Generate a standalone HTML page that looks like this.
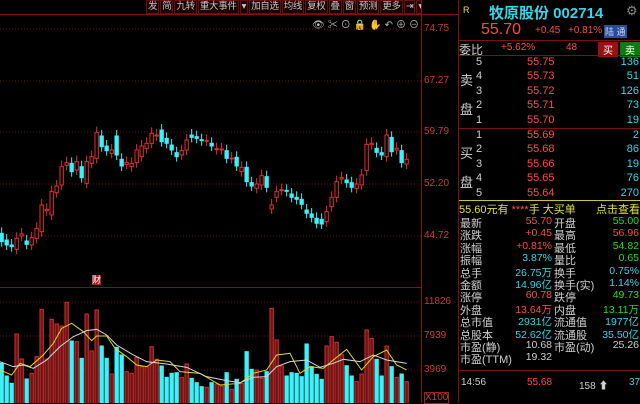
<!DOCTYPE html>
<html><head><meta charset="utf-8"><style>
*{margin:0;padding:0}
body{width:640px;height:403px;background:#000;overflow:hidden;position:relative;font-family:"Liberation Sans","Noto Sans CJK SC",sans-serif}
.a{position:absolute;white-space:nowrap}
#tb{position:absolute;left:146px;top:0;height:14px;display:flex;font-size:9.5px;color:#c8c8c8;width:275px;overflow:hidden;white-space:nowrap}
#tb span{flex-shrink:0;border:1px solid #6a0c0c;background:#1a0000;padding:0 1px;line-height:12px;margin-right:1px;letter-spacing:-0.3px}
.ax{position:absolute;left:424px;font-size:10px;color:#d03838}
#rp{position:absolute;left:458px;top:0;width:182px;height:403px;border-left:1px solid #7a1010}
.r{position:absolute;font-size:11px;white-space:nowrap}
.red{color:#ff4a4a}.cy{color:#36d6e8}.gr{color:#22dd22}.wh{color:#d0d0d0}.ye{color:#e0e040}
.hl{position:absolute;left:0;width:182px;height:1px;background:#7a1010}
</style></head><body>
<div style="position:absolute;left:0;top:14px;width:458px;height:1px;background:#8a1010"></div>
<div style="position:absolute;left:421px;top:0;width:1px;height:403px;background:#8a1010"></div>
<div style="position:absolute;left:0;top:287px;width:421px;height:1px;background:#8a1010"></div>
<div id="tb"><span>发</span><span>简</span><span>九转</span><span>重大事件</span><span>▾</span><span>加自选</span><span>均线</span><span>复权</span><span>叠</span><span>窗</span><span>预测</span><span>更多</span><span>⇥</span><span>▾</span></div>
<div class="a" style="left:312px;top:16px;font-size:10px;color:#bbb;letter-spacing:3px">👁✂⊙🔒✋↶⊕⊖</div>
<div class="ax" style="top:23px">74.75</div>
<div class="ax" style="top:75px">67.27</div>
<div class="ax" style="top:126px">59.79</div>
<div class="ax" style="top:178px">52.20</div>
<div class="ax" style="top:230px">44.72</div>
<div class="ax" style="top:296px">11826</div>
<div class="ax" style="top:330px">7939</div>
<div class="ax" style="top:364px">3969</div>
<div class="ax" style="top:392px;border:1px solid #a02020;line-height:10px">X100</div>
<div class="a" style="left:92px;top:275px;font-size:9px;color:#fff;background:#a02020;line-height:10px">财</div>
<svg id="sv" width="421" height="403" style="position:absolute;left:0;top:0"></svg>
<div id="rp">
<div class="r ye" style="left:4px;top:5px;font-size:9px">R</div>
<div class="r cy" style="left:30px;top:2px;font-size:15px;font-weight:bold">牧原股份 002714</div>
<div class="r" style="left:167px;top:3px;color:#888;font-size:13px">⚙</div>
<div class="r red" style="left:22px;top:21px;font-size:16px">55.70</div>
<div class="r red" style="left:76px;top:25px;font-size:10px">+0.45</div>
<div class="r red" style="left:109px;top:25px;font-size:10px">+0.81%</div>
<div class="r" style="left:145px;top:25px;font-size:9px;background:#2a4a9a;color:#cde;padding:0 1px">陆 通</div>
<div class="hl" style="top:40px"></div>
<div class="r wh" style="left:0;top:41px;font-size:12px">委比</div>
<div class="r red" style="left:42px;top:42px;font-size:10px">+5.62%</div>
<div class="r red" style="left:107px;top:42px;font-size:10px">48</div>
<div class="r" style="left:139px;top:42px;font-size:10px;background:#9a1010;color:#fff;padding:0 5px">买</div>
<div class="r" style="left:161px;top:42px;font-size:10px;background:#107a10;color:#fff;padding:0 5px">卖</div>
<div class="hl" style="top:55px"></div>
<div class="hl" style="top:128px"></div>
<div class="hl" style="top:200px;background:#d0c040"></div>
<div class="hl" style="top:370px"></div>
<div id="ob"></div>
<div class="r ye" style="left:0;top:201px;font-size:11px">55.60元有 <span class="red">****</span>手 大买单</div>
<div class="r ye" style="left:137px;top:201px;font-size:11px">点击查看</div>
<div id="st"></div>
<div class="r wh" style="left:2px;top:377px;font-size:10px">14:56</div>
<div class="r red" style="left:68px;top:377px;font-size:10px">55.68</div>
<div class="r wh" style="left:120px;top:377px;font-size:10px">158 ⬆</div>
<div class="r cy" style="left:170px;top:377px;font-size:10px">37</div>
</div>
<script>
var sv=document.getElementById('sv'),h='';
[29,81,132,184,236,302,336,370].forEach(function(y){h+='<line x1="0" x2="421" y1="'+y+'" y2="'+y+'" stroke="#6a1010" stroke-dasharray="1,2"/>'});
var C=[[370,395,'c'],[390,405,'c'],[405,410,'c'],[385,418,'r'],[372,378,'r'],[393,403,'c'],[383,405,'r'],[355,385,'r'],[285,365,'r'],[298,302,'r'],[245,315,'r'],[228,248,'r'],[170,225,'r'],[158,166,'r'],[160,185,'c'],[155,180,'r'],[170,203,'c'],[155,220,'r'],[140,160,'r'],[68,145,'r'],[78,110,'c'],[108,122,'c'],[120,130,'r'],[78,135,'c'],[148,168,'c'],[157,163,'r'],[160,170,'r'],[120,158,'r'],[108,140,'r'],[100,115,'r'],[70,100,'r'],[75,78,'r'],[60,95,'c'],[85,100,'c'],[105,120,'c'],[128,140,'c'],[122,135,'r'],[90,120,'r'],[75,82,'c'],[80,85,'c'],[89,92,'c'],[91,93,'r'],[100,108,'c'],[116,118,'r'],[117,119,'r'],[122,145,'c'],[144,146,'r'],[142,168,'c'],[172,185,'r'],[172,215,'c'],[218,228,'c'],[222,235,'r'],[197,225,'r'],[200,232,'c'],[285,297,'r'],[245,262,'r'],[239,241,'r'],[241,244,'c'],[252,262,'c'],[262,268,'c'],[268,283,'c'],[300,310,'c'],[312,322,'c'],[325,340,'c'],[328,342,'c'],[305,335,'r'],[262,290,'r'],[215,262,'r'],[203,207,'r'],[210,218,'c'],[218,232,'c'],[222,235,'r'],[195,225,'r'],[103,182,'r'],[100,104,'r'],[115,127,'c'],[128,135,'c'],[75,140,'r'],[82,125,'c'],[115,120,'r'],[122,158,'c'],[148,162,'r']];
h+='<g transform="translate(0,110) scale(0.3333)">';
C.forEach(function(c,i){var x=5+15*i,col=c[2]=='c'?'#3ff0f8':'#e03030';
h+='<line x1="'+x+'" x2="'+x+'" y1="'+(c[0]-18)+'" y2="'+(c[1]+15)+'" stroke="'+col+'" stroke-width="3"/>';
h+='<rect x="'+(x-5)+'" y="'+c[0]+'" width="10" height="'+Math.max(3,c[1]-c[0])+'" fill="'+(c[2]=='c'?col:'#000')+'" stroke="'+col+'" stroke-width="3"/>';});
h+='</g>';
var V=[310,348,370,222,297,357,340,290,148,297,178,192,198,127,243,245,295,162,273,150,258,295,342,262,285,335,340,292,320,320,260,298,318,352,340,338,352,312,355,368,380,382,368,372,378,338,388,358,370,275,328,330,355,335,145,240,318,348,338,340,350,252,320,343,358,258,230,247,284,317,348,365,342,210,235,298,348,258,320,352,342,365];
h+='<g transform="translate(0,260) scale(0.3333)">';
V.forEach(function(t,i){var x=5+15*i,c=C[i][2]=='c';
h+='<rect x="'+(x-5)+'" y="'+t+'" width="10" height="'+(440-t)+'" fill="'+(c?'#3ff0f8':'#6a1414')+'" stroke="'+(c?'#3ff0f8':'#d03030')+'" stroke-width="3"/>';});
h+='<polyline fill="none" stroke="#d8d830" stroke-width="3" points="0,330 35,345 60,310 90,320 130,285 160,250 185,205 215,190 250,215 275,242 290,228 320,228 345,265 380,290 410,315 440,320 470,300 510,305 540,335 600,340 660,375 720,370 760,340 800,330 830,285 870,280 900,340 930,320 970,325 1000,300 1040,268 1085,330 1120,290 1160,270 1190,315 1220,330"/>';
h+='<polyline fill="none" stroke="#d8d8d8" stroke-width="3" points="0,305 40,320 70,315 100,325 140,300 180,260 220,230 260,212 290,208 320,225 350,255 400,285 440,305 500,312 560,322 620,350 680,362 720,368 760,352 800,350 830,320 870,305 920,300 960,322 1000,310 1030,298 1080,305 1120,285 1160,300 1220,310"/>';
h+='</g>';
sv.innerHTML=h;
var ob='',S=[['5','55.75','136'],['4','55.73','51'],['3','55.72','126'],['2','55.71','73'],['1','55.70','19'],['1','55.69','2'],['2','55.68','86'],['3','55.66','19'],['4','55.65','76'],['5','55.64','270']];
S.forEach(function(s,i){var y=56+i*14.4+(i>=5?1:0);
ob+='<div class="r wh" style="left:17px;top:'+y+'px;font-size:11px">'+s[0]+'</div><div class="r red" style="left:68px;top:'+y+'px;font-size:11px">'+s[1]+'</div><div class="r cy" style="right:2px;top:'+y+'px;font-size:11px">'+s[2]+'</div>';});
ob+='<div class="r wh" style="left:1px;top:70px;font-size:13px">卖</div><div class="r wh" style="left:1px;top:99px;font-size:13px">盘</div><div class="r wh" style="left:1px;top:143px;font-size:13px">买</div><div class="r wh" style="left:1px;top:172px;font-size:13px">盘</div>';
document.getElementById('ob').innerHTML=ob;
var T=[['最新','55.70','red','开盘','55.00','gr'],['涨跌','+0.45','red','最高','56.96','red'],['涨幅','+0.81%','red','最低','54.82','gr'],['振幅','3.87%','cy','量比','0.65','gr'],['总手','26.75万','cy','换手','0.75%','cy'],['金额','14.96亿','cy','换手(实)','1.14%','cy'],['涨停','60.78','red','跌停','49.73','gr'],['外盘','13.64万','red','内盘','13.11万','gr'],['总市值','2931亿','cy','流通值','1977亿','cy'],['总股本','52.62亿','cy','流通股','35.50亿','cy'],['市盈(静)','10.68','wh','市盈(动)','25.26','wh'],['市盈(TTM)','19.32','wh','','','wh']],st='';
T.forEach(function(t,i){var y=215+i*12.4;
st+='<div class="r wh" style="left:1px;top:'+y+'px">'+t[0]+'</div><div class="r '+t[2]+'" style="right:89px;top:'+y+'px;font-size:10.5px">'+t[1]+'</div><div class="r wh" style="left:95px;top:'+y+'px">'+t[3]+'</div><div class="r '+t[5]+'" style="right:2px;top:'+y+'px;font-size:10.5px">'+t[4]+'</div>';});
document.getElementById('st').innerHTML=st;
</script>
</body></html>
